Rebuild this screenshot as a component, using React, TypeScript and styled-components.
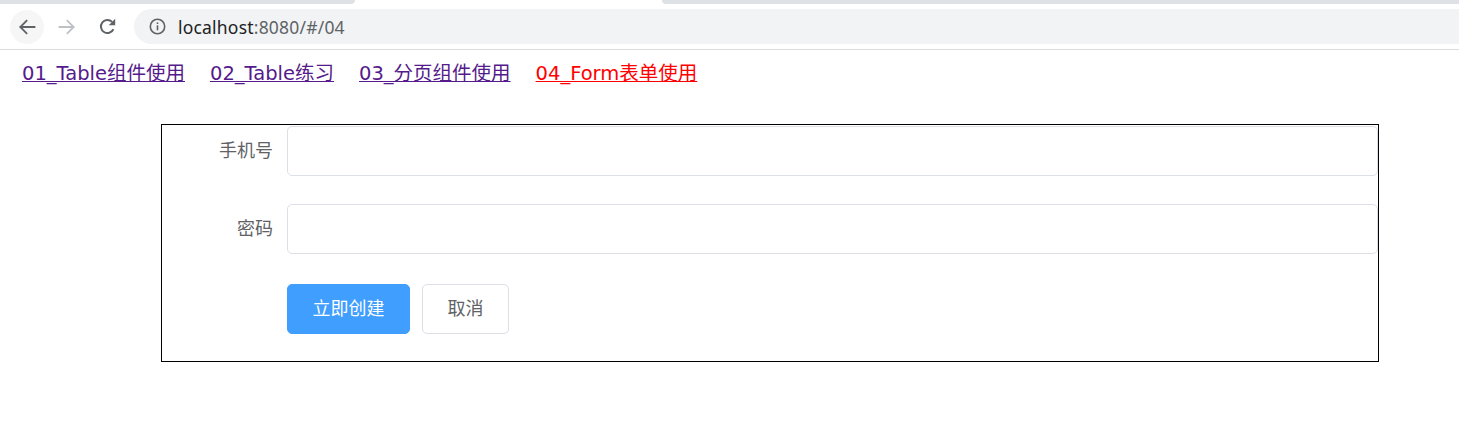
import React from "react";
import styled, { createGlobalStyle } from "styled-components";

const GlobalStyle = createGlobalStyle`
  html, body { margin: 0; padding: 0; background: #ffffff; }
  body { font-family: "Noto Sans CJK SC", "Noto Sans", sans-serif; }
  * { box-sizing: border-box; }
`;

/* ---------- browser chrome ---------- */
const Chrome = styled.header`
  display: flex;
  flex-direction: column;
`;

const TabStrip = styled.div`
  display: flex;
  height: 4px;
  background: #ffffff;
`;

const TabEdge = styled.div<{ $width?: number; $side: "left" | "right" }>`
  height: 4px;
  background: #dee1e6;
  width: ${(p) => (p.$width ? `${p.$width}px` : "auto")};
  flex: ${(p) => (p.$width ? "0 0 auto" : "1")};
  border-bottom-right-radius: ${(p) => (p.$side === "left" ? "4px" : "0")};
  border-bottom-left-radius: ${(p) => (p.$side === "right" ? "4px" : "0")};
`;

const TabGap = styled.div`
  width: 307px;
`;

const Toolbar = styled.div`
  display: flex;
  align-items: center;
  height: 46px;
  padding-left: 10px;
  gap: 6px;
  background: #ffffff;
  border-bottom: 1px solid #dadce0;
`;

const NavButton = styled.div<{ $hover?: boolean }>`
  width: 34px;
  height: 34px;
  border-radius: 50%;
  display: flex;
  align-items: center;
  justify-content: center;
  background: ${(p) => (p.$hover ? "#f6f6f6" : "transparent")};
  flex-shrink: 0;
`;

const AddressBar = styled.div`
  flex: 1;
  height: 35px;
  margin-left: 4px;
  border-radius: 17.5px 0 0 17.5px;
  background: #f1f3f4;
  display: flex;
  align-items: center;
  padding-left: 15px;
  gap: 12px;
`;

const UrlText = styled.span`
  font-family: "Noto Sans", "Liberation Sans", sans-serif;
  font-size: 17.5px;
  color: #5f6368;
  letter-spacing: 0.2px;
`;

const UrlHost = styled.span`
  color: #202124;
`;

/* ---------- page ---------- */
const Nav = styled.nav`
  display: flex;
  gap: 25px;
  padding: 14px 0 0 22px;
  font-family: "DejaVu Sans", "Noto Sans CJK SC", sans-serif;
  font-size: 19.5px;
  line-height: 20px;
`;

const NavLink = styled.a<{ $active?: boolean }>`
  color: ${(p) => (p.$active ? "#ff0000" : "#551a8b")};
  text-decoration: underline;
  cursor: pointer;
`;

const Form = styled.form`
  width: 1218px;
  margin: 40px 0 0 161px;
  border: 1px solid #000000;
  padding: 1px 0 27px;
  display: flex;
  flex-direction: column;
`;

const FormItem = styled.div<{ $space?: number }>`
  display: flex;
  align-items: center;
  margin-bottom: ${(p) => (p.$space ?? 0)}px;
`;

const Label = styled.label`
  width: 125px;
  flex-shrink: 0;
  padding: 0 14px 4px 0;
  text-align: right;
  font-size: 18px;
  color: #606266;
`;

const Input = styled.input`
  flex: 1;
  height: 50px;
  border: 1px solid #dcdfe6;
  border-radius: 5px;
  padding: 0 19px;
  font-size: 18px;
  color: #606266;
  outline: none;
  background: #ffffff;
`;

const Actions = styled.div`
  display: flex;
  gap: 12px;
  margin-left: 125px;
`;

const Button = styled.button<{ $primary?: boolean }>`
  height: 50px;
  padding: 0 24.5px 4px;
  border-radius: 5px;
  font-family: inherit;
  font-size: 18px;
  cursor: pointer;
  border: 1px solid ${(p) => (p.$primary ? "#409eff" : "#dcdfe6")};
  background: ${(p) => (p.$primary ? "#409eff" : "#ffffff")};
  color: ${(p) => (p.$primary ? "#ffffff" : "#606266")};
`;

const BackIcon = ({ color }: { color: string }) => (
  <svg width="18" height="18" viewBox="0 0 18 18" fill="none">
    <path d="M16.5 9H2.5M8.5 2.8 2.3 9l6.2 6.2" stroke={color} strokeWidth="1.8" strokeLinecap="square" />
  </svg>
);

const ForwardIcon = ({ color }: { color: string }) => (
  <svg width="18" height="18" viewBox="0 0 18 18" fill="none">
    <path d="M1.5 9h14M9.5 2.8 15.7 9l-6.2 6.2" stroke={color} strokeWidth="1.8" strokeLinecap="square" />
  </svg>
);

const ReloadIcon = () => (
  <svg width="19" height="19" viewBox="0 0 18 18" fill="none">
    <path d="M14.6 11.6A6.2 6.2 0 1 1 13.4 4.6" stroke="#5f6368" strokeWidth="1.9" />
    <path d="M16.3 1.6v6.2h-6.2z" fill="#5f6368" />
  </svg>
);

const InfoIcon = () => (
  <svg width="17" height="17" viewBox="0 0 17 17" fill="none">
    <circle cx="8.5" cy="8.5" r="7.2" stroke="#5f6368" strokeWidth="1.6" />
    <rect x="7.7" y="7.3" width="1.6" height="5" fill="#5f6368" />
    <rect x="7.7" y="4.4" width="1.6" height="1.6" fill="#5f6368" />
  </svg>
);

export default function App() {
  return (
    <>
      <GlobalStyle />
      <Chrome>
        <TabStrip>
          <TabEdge $side="left" $width={355} />
          <TabGap />
          <TabEdge $side="right" />
        </TabStrip>
        <Toolbar>
          <NavButton $hover>
            <BackIcon color="#5f6368" />
          </NavButton>
          <NavButton>
            <ForwardIcon color="#bdc1c6" />
          </NavButton>
          <NavButton>
            <ReloadIcon />
          </NavButton>
          <AddressBar>
            <InfoIcon />
            <UrlText>
              <UrlHost>localhost</UrlHost>:8080/#/04
            </UrlText>
          </AddressBar>
        </Toolbar>
      </Chrome>

      <Nav>
        <NavLink>01_Table组件使用</NavLink>
        <NavLink>02_Table练习</NavLink>
        <NavLink>03_分页组件使用</NavLink>
        <NavLink $active>04_Form表单使用</NavLink>
      </Nav>

      <Form onSubmit={(e) => e.preventDefault()}>
        <FormItem $space={28}>
          <Label>手机号</Label>
          <Input type="text" />
        </FormItem>
        <FormItem $space={30}>
          <Label>密码</Label>
          <Input type="password" />
        </FormItem>
        <FormItem>
          <Actions>
            <Button type="button" $primary>立即创建</Button>
            <Button type="button">取消</Button>
          </Actions>
        </FormItem>
      </Form>
    </>
  );
}
